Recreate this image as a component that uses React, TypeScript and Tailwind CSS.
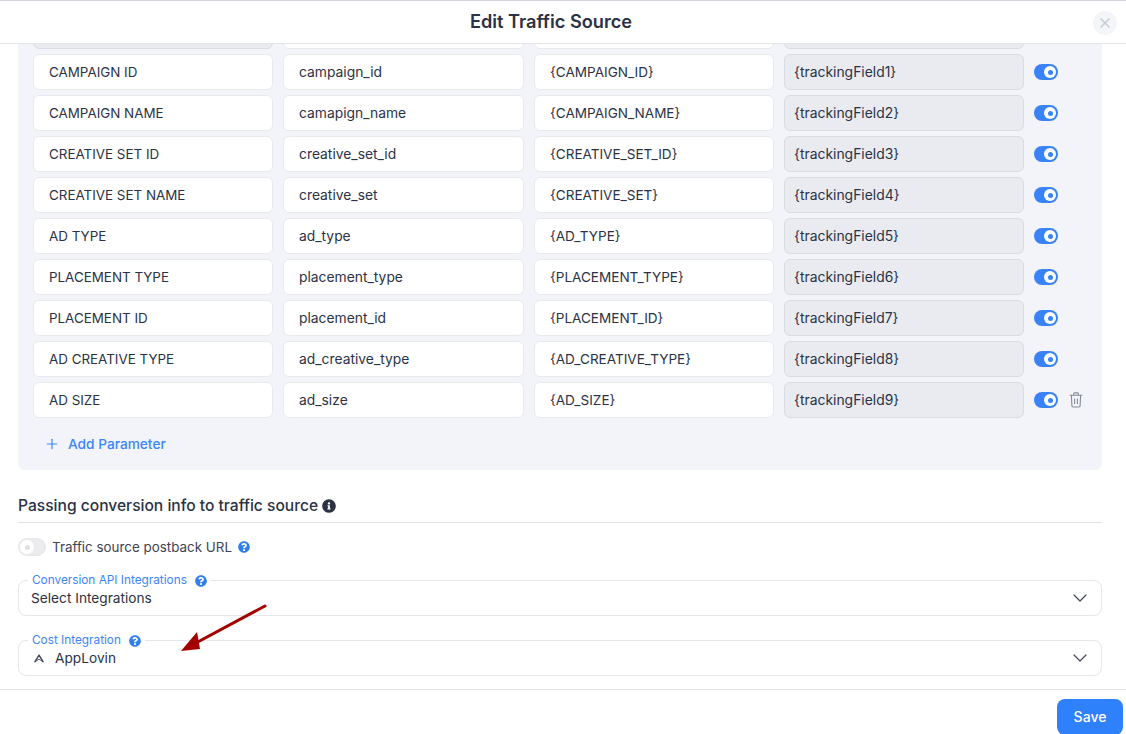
import React from "react";
import { ChevronDown, Plus, X } from "lucide-react";
import { FaInfoCircle, FaQuestionCircle } from "react-icons/fa";

const rows = [
  ["CAMPAIGN ID", "campaign_id", "{CAMPAIGN_ID}", "{trackingField1}"],
  ["CAMPAIGN NAME", "camapign_name", "{CAMPAIGN_NAME}", "{trackingField2}"],
  ["CREATIVE SET ID", "creative_set_id", "{CREATIVE_SET_ID}", "{trackingField3}"],
  ["CREATIVE SET NAME", "creative_set", "{CREATIVE_SET}", "{trackingField4}"],
  ["AD TYPE", "ad_type", "{AD_TYPE}", "{trackingField5}"],
  ["PLACEMENT TYPE", "placement_type", "{PLACEMENT_TYPE}", "{trackingField6}"],
  ["PLACEMENT ID", "placement_id", "{PLACEMENT_ID}", "{trackingField7}"],
  ["AD CREATIVE TYPE", "ad_creative_type", "{AD_CREATIVE_TYPE}", "{trackingField8}"],
  ["AD SIZE", "ad_size", "{AD_SIZE}", "{trackingField9}"],
];

function Field({ value, size }: { value: string; size?: string }) {
  return (
    <div className={"flex h-9 items-center rounded-md border border-[#e9eaee] bg-white pl-[15px] pt-px text-[#2b3245] " + size}>
      {value}
    </div>
  );
}

function LockedField({ value }: { value: string }) {
  return (
    <div className="flex h-9 items-center rounded-md border border-[#d9dce1] bg-[#e9ebf0] pl-[9px] pt-px text-[13.9px] text-[#2b3245]">
      {value}
    </div>
  );
}

function Toggle() {
  return (
    <div className="flex h-4 w-6 items-center justify-end rounded-full bg-[#3a82f7] pr-[2px]">
      <div className="flex h-3 w-3 items-center justify-center rounded-full bg-white">
        <div className="h-[5px] w-[5px] rounded-full bg-[#3a82f7]" />
      </div>
    </div>
  );
}

function TrashIcon() {
  return (
    <svg width="14" height="16" viewBox="0 0 14 16" fill="none" stroke="#868b94" strokeWidth="1.1" strokeLinecap="round" strokeLinejoin="round">
      <path d="M1 3.2h12" />
      <path d="M4.8 3V1.6c0-.4.3-.7.7-.7h3c.4 0 .7.3.7.7V3" />
      <path d="M2.4 3.4l.5 10.4c0 .7.5 1.2 1.2 1.2h5.8c.7 0 1.2-.5 1.2-1.2l.5-10.4" />
      <path d="M5.6 7v4.6M8.4 7v4.6" />
    </svg>
  );
}

function AppLovinIcon() {
  return (
    <svg width="12" height="9" viewBox="0 0 12 9" fill="none" stroke="#454b58" strokeLinecap="round">
      <path d="M6 1.2 2 7.6M6 1.2l4 6.4" strokeWidth="1.5" />
      <path d="M2 7.8 6 5.2l4 2.6" strokeWidth="0.9" />
    </svg>
  );
}

function SelectBox({ label, children }: { label: string; children: React.ReactNode }) {
  return (
    <div className="relative flex h-9 items-center justify-between rounded-lg border border-[#e6e7ea] pl-3 pr-[9px] text-[13.7px] text-[#2b3245]">
      <div className="absolute top-[-7px] left-[9px] flex h-[14px] items-center gap-2 bg-white px-1 text-[11.8px] text-[#3b86f7]">
        {label}
        <FaQuestionCircle className="h-3 w-3 text-[#2f7ff0]" />
      </div>
      <div className="flex items-center">{children}</div>
      <ChevronDown className="h-6 w-6 text-[#454b58]" strokeWidth={1.25} />
    </div>
  );
}

export default function App() {
  return (
    <div className="relative flex h-[734px] w-[1126px] flex-col overflow-hidden border-t border-[#cfd2d8] bg-white font-['Inter',sans-serif]">
      {/* Header */}
      <div className="relative flex h-[43px] shrink-0 items-center justify-center border-b border-[#e3e4e8] bg-white pr-6">
        <h1 className="text-[18.2px] font-semibold text-[#2b3245]">Edit Traffic Source</h1>
        <div className="absolute right-[9px] top-[10px] flex h-6 w-6 items-center justify-center rounded-full bg-[#f4f5f8]">
          <X className="h-4 w-4 text-[#c5cad6]" strokeWidth={2.5} />
        </div>
      </div>

      {/* Body */}
      <div className="flex-1 overflow-hidden pl-[18px] pr-6">
        <div className="-mt-[31px] rounded-md bg-[#f3f4f9] pb-[8px] pl-[15px]">
          <div className="flex flex-col gap-[5px]">
            <div className="grid grid-cols-[240px_241px_240px_240px_24px] gap-x-[10px]">
              <LockedField value="" />
              <Field value="" />
              <Field value="" />
              <LockedField value="" />
            </div>
            {rows.map((row, i) => (
              <div key={row[0]} className="grid grid-cols-[240px_241px_240px_240px_24px] items-center gap-x-[10px]">
                <Field value={row[0]} size="text-[13.4px]" />
                <Field value={row[1]} size="text-[13.85px]" />
                <Field value={row[2]} size="text-[13.55px]" />
                <LockedField value={row[3]} />
                <div className="relative">
                  <Toggle />
                  {i === rows.length - 1 && (
                    <div className="absolute left-[35px] top-0">
                      <TrashIcon />
                    </div>
                  )}
                </div>
              </div>
            ))}
          </div>
          <div className="mt-[8px] flex h-[36px] items-center pl-[11px] text-[13.7px] font-medium text-[#3b86f7]">
            <Plus className="mr-2 h-4 w-4" strokeWidth={1.75} />
            Add Parameter
          </div>
        </div>

        <div className="mt-[25px] flex h-[28px] items-center gap-1 border-b border-[#e3e4e8] pb-[5px] text-[15.6px] font-medium text-[#2b3245]">
          Passing conversion info to traffic source
          <FaInfoCircle className="h-[14px] w-[14px] text-[#2b3245]" />
        </div>

        <div className="mt-[14px] flex items-center text-[13.4px] text-[#3e4452]">
          <div className="flex h-[18px] w-7 items-center rounded-full border border-[#e6e7ea] bg-[#ececee] pl-px">
            <div className="flex h-[14px] w-[14px] items-center justify-center rounded-full bg-white">
              <div className="h-[5px] w-[5px] rounded-full bg-[#e0e1e4]" />
            </div>
          </div>
          <span className="ml-[6px]">Traffic source postback URL</span>
          <FaQuestionCircle className="ml-[6px] h-3 w-3 text-[#2f7ff0]" />
        </div>

        <div className="mt-[23px] flex flex-col gap-6">
          <SelectBox label="Conversion API Integrations">Select Integrations</SelectBox>
          <SelectBox label="Cost Integration">
            <span className="ml-[2px] mr-[10px]">
              <AppLovinIcon />
            </span>
            AppLovin
          </SelectBox>
        </div>
      </div>

      {/* Footer */}
      <div className="flex h-[45px] shrink-0 items-start justify-end border-t border-[#e3e4e8] pr-[3px] pt-[9px]">
        <button className="flex h-9 w-[66px] items-center justify-center rounded-lg bg-[#2f80fb] text-sm font-medium text-white">
          Save
        </button>
      </div>

      {/* Annotation arrow over the screenshot */}
      <svg className="pointer-events-none absolute left-0 top-0" width="1126" height="734">
        <line x1="265" y1="605" x2="194" y2="643" stroke="#a30000" strokeWidth="3" strokeLinecap="round" />
        <path d="M181 650 L197 631 L200 648 Z" fill="#a30000" />
      </svg>
    </div>
  );
}
